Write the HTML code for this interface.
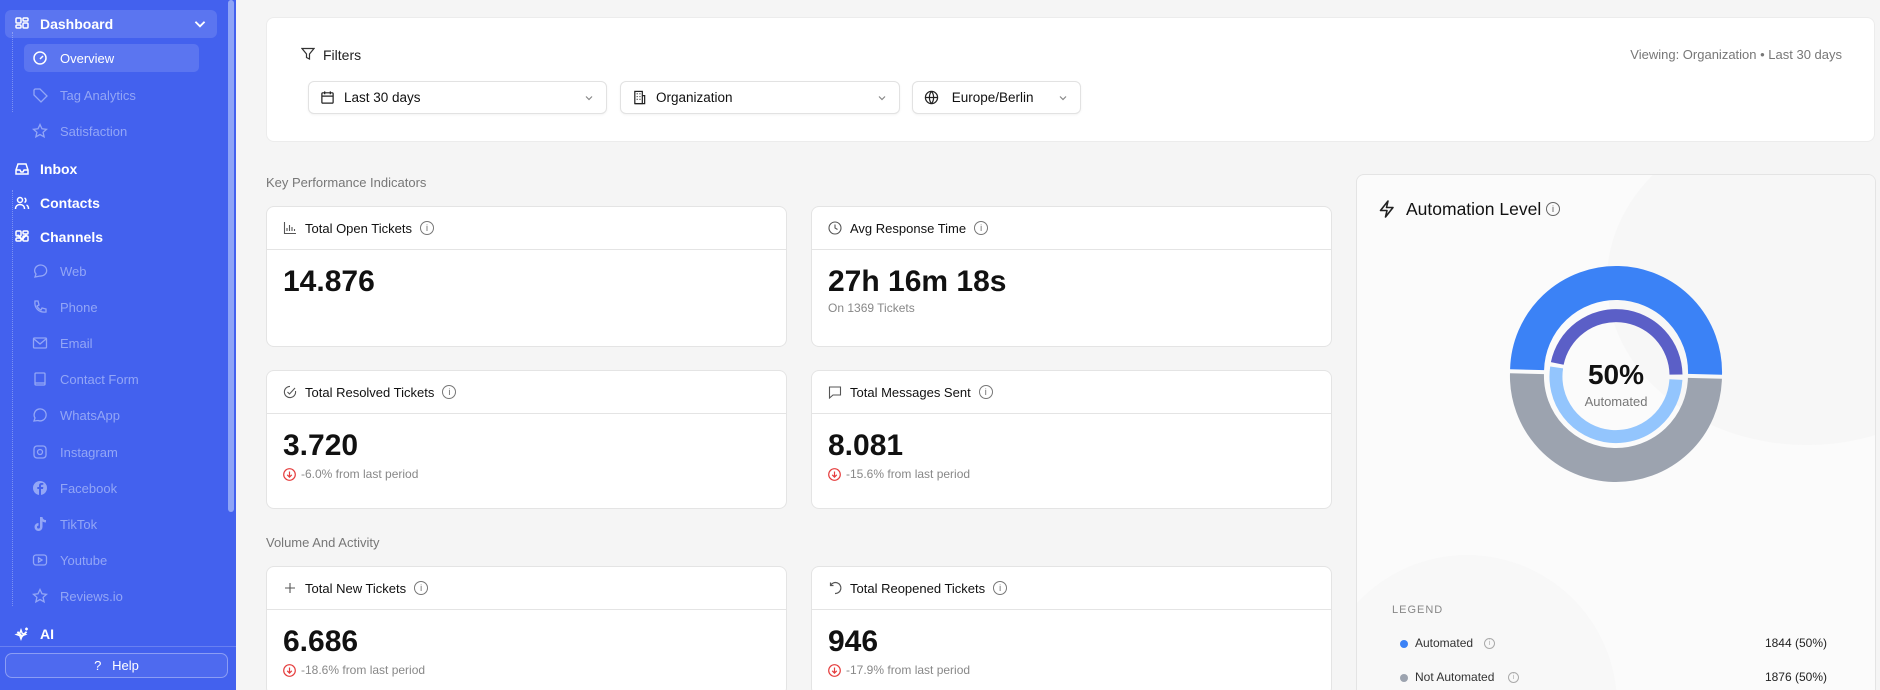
<!DOCTYPE html>
<html style="overflow:hidden;width:1880px;height:690px"><head><meta charset="utf-8"><style>
*{box-sizing:border-box;margin:0;padding:0}
body{width:1880px;height:690px;overflow:hidden;background:#f5f5f5;font-family:"Liberation Sans",sans-serif;position:relative;color:#111}
.a{position:absolute}
#sb{left:0;top:0;width:236px;height:690px;background:#4361ee}
.si{position:absolute;left:0;width:236px;height:20px;display:flex;align-items:center;font-size:14px;color:#fff;font-weight:bold}
.si svg{position:absolute;left:14px;width:16px;height:16px}
.si span{position:absolute;left:40px}
.sub{font-weight:normal;font-size:13px;color:#93a6f6}
.sub svg{left:32px}
.sub span{left:60px}
.chev{position:absolute;left:192px;width:14px;height:14px}
.card{position:absolute;background:#fff;border:1px solid #e4e4e4;border-radius:8px;overflow:hidden}
.ch{height:43px;border-bottom:1px solid #e4e4e4;display:flex;align-items:center;padding-left:16px;font-size:13px;color:#111}
.ch svg{width:14px;height:14px;margin-right:8px}
.info{width:14px;height:14px;border:1px solid #777;border-radius:50%;margin-left:8px;font-size:9px;color:#666;display:flex;align-items:center;justify-content:center}
.num{position:absolute;left:16px;top:58px;font-size:30px;font-weight:bold;color:#111}
.sub2{position:absolute;left:16px;top:96px;font-size:12px;color:#888;display:flex;align-items:center}
.down{width:13px;height:13px;margin-right:5px}
.dd{position:absolute;top:81px;height:33px;background:#fff;border:1px solid #e2e2e2;border-radius:6px;display:flex;align-items:center;font-size:13.5px;color:#111;box-shadow:0 1px 2px rgba(0,0,0,.05)}
.dd svg.i{width:15px;height:15px;margin:0 9px 0 11px}
.dd .cv{position:absolute;right:12px;top:11px;width:10px;height:10px}
.sec{position:absolute;left:266px;font-size:13px;color:#777}
</style></head><body>
<svg width="0" height="0" style="position:absolute"><defs><g id="dn"><circle cx="6.5" cy="6.5" r="5.8" fill="none" stroke="#e53e3e" stroke-width="1.2"/><path d="M6.5 3.5v5.5M4.2 6.8l2.3 2.3 2.3-2.3" fill="none" stroke="#e53e3e" stroke-width="1.2"/></g></defs></svg>
<div class="a" id="sb"></div>
<div class="a" style="left:228px;top:0;width:6px;height:512px;background:#8ea4f7;border-radius:3px"></div>
<div class="a" style="left:5px;top:10px;width:212px;height:28px;background:rgba(255,255,255,.13);border-radius:6px"></div>
<div class="a" style="left:24px;top:44px;width:175px;height:28px;background:rgba(255,255,255,.13);border-radius:5px"></div>
<div class="a" style="left:12px;top:32px;width:1px;height:80px;border-left:1px dotted rgba(255,255,255,.3)"></div>
<div class="a" style="left:12px;top:190px;width:1px;height:416px;border-left:1px dotted rgba(255,255,255,.3)"></div>

<div class="si" style="top:14px"><svg viewBox="0 0 16 16" fill="none" stroke="#fff" stroke-width="1.5"><rect x="2" y="2" width="5" height="5" rx="1"/><rect x="9" y="2" width="5" height="3" rx="1"/><rect x="2" y="9" width="5" height="3" rx="1"/><rect x="9" y="7" width="5" height="5" rx="1"/></svg><span>Dashboard</span><svg class="chev" style="left:192px" viewBox="0 0 14 14" fill="none" stroke="#fff" stroke-width="1.6"><path d="M3 5l4 4 4-4"/></svg></div>
<div class="si sub" style="top:48px;color:#fff"><svg viewBox="0 0 16 16" fill="none" stroke="#fff" stroke-width="1.5"><circle cx="8" cy="8" r="6"/><path d="M8 9l3-3"/></svg><span>Overview</span></div>
<div class="si sub" style="top:85px"><svg viewBox="0 0 16 16" fill="none" stroke="#93a6f6" stroke-width="1.3"><path d="M2 3v5l7 7 6-6-7-7H3z"/></svg><span>Tag Analytics</span></div>
<div class="si sub" style="top:121px"><svg viewBox="0 0 16 16" fill="none" stroke="#93a6f6" stroke-width="1.3"><path d="M8 1.5l2 4.3 4.5.5-3.4 3 1 4.5L8 11.5 3.9 13.8l1-4.5-3.4-3 4.5-.5z"/></svg><span>Satisfaction</span></div>
<div class="si" style="top:159px"><svg viewBox="0 0 16 16" fill="none" stroke="#fff" stroke-width="1.5"><path d="M2 9l2-6h8l2 6v4H2zM2 9h4l1 2h2l1-2h4"/></svg><span>Inbox</span></div>
<div class="si" style="top:193px"><svg viewBox="0 0 16 16" fill="none" stroke="#fff" stroke-width="1.5"><circle cx="6" cy="5" r="2.5"/><path d="M1.5 14c0-3 2-4.5 4.5-4.5s4.5 1.5 4.5 4.5M10.5 3a2.5 2.5 0 010 4.5M12.5 10c1.3.6 2 2 2 4"/></svg><span>Contacts</span></div>
<div class="si" style="top:227px"><svg viewBox="0 0 16 16" fill="none" stroke="#fff" stroke-width="1.5"><rect x="2" y="2" width="5" height="5" rx="1"/><rect x="9" y="2" width="5" height="3" rx="1"/><rect x="2" y="9" width="5" height="3" rx="1"/><rect x="9" y="7" width="5" height="5" rx="1"/></svg><span>Channels</span><svg class="chev" viewBox="0 0 14 14" fill="none" stroke="#fff" stroke-width="1.6"><path d="M3 5l4 4 4-4"/></svg></div>
<div class="si sub" style="top:261px"><svg viewBox="0 0 16 16" fill="none" stroke="#93a6f6" stroke-width="1.3"><path d="M3 14l1-3a6 5.5 0 114 2z"/></svg><span>Web</span></div>
<div class="si sub" style="top:297px"><svg viewBox="0 0 16 16" fill="none" stroke="#93a6f6" stroke-width="1.3"><path d="M3 2h3l1 4-2 1a8 8 0 004 4l1-2 4 1v3c-7 1-12-4-11-11z"/></svg><span>Phone</span></div>
<div class="si sub" style="top:333px"><svg viewBox="0 0 16 16" fill="none" stroke="#93a6f6" stroke-width="1.3"><rect x="1.5" y="3" width="13" height="10" rx="1"/><path d="M2 4l6 5 6-5"/></svg><span>Email</span></div>
<div class="si sub" style="top:369px"><svg viewBox="0 0 16 16" fill="none" stroke="#93a6f6" stroke-width="1.3"><rect x="3" y="2" width="10" height="12" rx="1"/><path d="M3 12h10"/></svg><span>Contact Form</span></div>
<div class="si sub" style="top:405px"><svg viewBox="0 0 16 16" fill="none" stroke="#93a6f6" stroke-width="1.3"><path d="M2 14l1-3a6 6 0 113 2.5z"/></svg><span>WhatsApp</span></div>
<div class="si sub" style="top:442px"><svg viewBox="0 0 16 16" fill="none" stroke="#93a6f6" stroke-width="1.3"><rect x="2" y="2" width="12" height="12" rx="3"/><circle cx="8" cy="8" r="2.5"/></svg><span>Instagram</span></div>
<div class="si sub" style="top:478px"><svg viewBox="0 0 16 16"><circle cx="8" cy="8" r="7" fill="#93a6f6"/><path d="M9 15V9h2l.3-2H9V5.8c0-.6.3-1 1-1h1.3V3h-1.8C7.8 3 7 4 7 5.5V7H5.3v2H7v6z" fill="#4361ee"/></svg><span>Facebook</span></div>
<div class="si sub" style="top:514px"><svg viewBox="0 0 16 16"><path d="M8 1h2.5c.2 2 1.5 3 3.5 3v2.5c-1.3 0-2.5-.4-3.5-1V11a4 4 0 11-4-4v2.6A1.5 1.5 0 108 11z" fill="#93a6f6"/></svg><span>TikTok</span></div>
<div class="si sub" style="top:550px"><svg viewBox="0 0 16 16" fill="none" stroke="#93a6f6" stroke-width="1.3"><rect x="1.5" y="3" width="13" height="10" rx="2.5"/><path d="M6.5 5.8v4.4L10 8z"/></svg><span>Youtube</span></div>
<div class="si sub" style="top:586px"><svg viewBox="0 0 16 16" fill="none" stroke="#93a6f6" stroke-width="1.3"><path d="M8 1.5l2 4.3 4.5.5-3.4 3 1 4.5L8 11.5 3.9 13.8l1-4.5-3.4-3 4.5-.5z"/></svg><span>Reviews.io</span></div>
<div class="si" style="top:624px"><svg viewBox="0 0 16 16" fill="none" stroke="#fff" stroke-width="1.4"><path d="M7 4l1.2 3.3L11.5 8.5 8.2 9.7 7 13 5.8 9.7 2.5 8.5l3.3-1.2zM12.5 1.5v3M11 3h3"/></svg><span>AI</span><svg class="chev" viewBox="0 0 14 14" fill="none" stroke="#fff" stroke-width="1.6"><path d="M3 5l4 4 4-4"/></svg></div>
<div class="a" style="left:0;top:646px;width:236px;height:1px;background:rgba(255,255,255,.2)"></div>
<div class="a" style="left:5px;top:653px;width:223px;height:25px;border:1px solid rgba(255,255,255,.35);border-radius:7px;background:rgba(255,255,255,.06);color:#fff;font-size:13px;display:flex;align-items:center;justify-content:center">?&nbsp;&nbsp;&nbsp;Help</div>

<!-- filters -->
<div class="a" style="left:266px;top:17px;width:1609px;height:125px;background:#fff;border-radius:8px;border:1px solid #ececec"></div>
<svg class="a" style="left:301px;top:47px" width="14" height="14" viewBox="0 0 14 14" fill="none" stroke="#333" stroke-width="1.2"><path d="M1 1.5h12L8.5 7v5l-3-1.5V7z"/></svg>
<div class="a" style="left:323px;top:47px;font-size:14px;color:#222">Filters</div>
<div class="a" style="left:1576px;top:47px;width:266px;text-align:right;font-size:13px;color:#777">Viewing: Organization • Last 30 days</div>
<div class="dd" style="left:308px;width:299px"><svg class="i" viewBox="0 0 16 16" fill="none" stroke="#222" stroke-width="1.3"><rect x="2" y="3" width="12" height="11" rx="1"/><path d="M2 6.5h12M5 1.5v3M11 1.5v3"/></svg>Last 30 days<svg class="cv" viewBox="0 0 10 10" fill="none" stroke="#888" stroke-width="1.2"><path d="M2 3.5l3 3 3-3"/></svg></div>
<div class="dd" style="left:620px;width:280px"><svg class="i" viewBox="0 0 16 16" fill="none" stroke="#222" stroke-width="1.3"><rect x="3" y="1.5" width="8" height="13"/><path d="M11 6h2.5v8.5H3M5 4h1M8 4h1M5 7h1M8 7h1M5 10h1M8 10h1"/></svg>Organization<svg class="cv" viewBox="0 0 10 10" fill="none" stroke="#888" stroke-width="1.2"><path d="M2 3.5l3 3 3-3"/></svg></div>
<div class="dd" style="left:912px;width:169px"><svg class="i" viewBox="0 0 16 16" fill="none" stroke="#222" stroke-width="1.3"><circle cx="8" cy="8" r="6.5"/><path d="M1.5 8h13M8 1.5c-3 3.5-3 9.5 0 13M8 1.5c3 3.5 3 9.5 0 13"/></svg>&nbsp;Europe/Berlin<svg class="cv" viewBox="0 0 10 10" fill="none" stroke="#888" stroke-width="1.2"><path d="M2 3.5l3 3 3-3"/></svg></div>

<div class="sec" style="top:175px">Key Performance Indicators</div>
<div class="sec" style="top:535px">Volume And Activity</div>

<div class="card" style="left:266px;top:206px;width:521px;height:141px"><div class="ch"><svg viewBox="0 0 14 14" fill="none" stroke="#555" stroke-width="1.1"><path d="M1.5 1v11.5H13M4 10V7M6.5 10V4M9 10V6M11.5 10V8"/></svg>Total Open Tickets<div class="info">i</div></div><div class="num">14.876</div></div>
<div class="card" style="left:811px;top:206px;width:521px;height:141px"><div class="ch"><svg viewBox="0 0 14 14" fill="none" stroke="#555" stroke-width="1.1"><circle cx="7" cy="7" r="6"/><path d="M7 3.5V7l2.5 1.5"/></svg>Avg Response Time<div class="info">i</div></div><div class="num">27h 16m 18s</div><div class="sub2" style="top:94px">On 1369 Tickets</div></div>
<div class="card" style="left:266px;top:370px;width:521px;height:139px"><div class="ch"><svg viewBox="0 0 14 14" fill="none" stroke="#555" stroke-width="1.1"><path d="M12.5 6A5.6 5.6 0 117 1.4"/><path d="M4.5 7l2 2L12 3"/></svg>Total Resolved Tickets<div class="info">i</div></div><div class="num">3.720</div><div class="sub2"><svg class="down" viewBox="0 0 13 13"><use href="#dn"/></svg>-6.0% from last period</div></div>
<div class="card" style="left:811px;top:370px;width:521px;height:139px"><div class="ch"><svg viewBox="0 0 14 14" fill="none" stroke="#555" stroke-width="1.1"><path d="M1.5 2h11v8H5l-3.5 3z"/></svg>Total Messages Sent<div class="info">i</div></div><div class="num">8.081</div><div class="sub2"><svg class="down" viewBox="0 0 13 13"><use href="#dn"/></svg>-15.6% from last period</div></div>
<div class="card" style="left:266px;top:566px;width:521px;height:130px"><div class="ch"><svg viewBox="0 0 14 14" fill="none" stroke="#555" stroke-width="1.1"><path d="M7 2v10M2 7h10"/></svg>Total New Tickets<div class="info">i</div></div><div class="num">6.686</div><div class="sub2"><svg class="down" viewBox="0 0 13 13"><use href="#dn"/></svg>-18.6% from last period</div></div>
<div class="card" style="left:811px;top:566px;width:521px;height:130px"><div class="ch"><svg viewBox="0 0 14 14" fill="none" stroke="#555" stroke-width="1.2"><path d="M2.5 4.5A5.5 5.5 0 117 12.5M2.5 1.5v3h3"/></svg>Total Reopened Tickets<div class="info">i</div></div><div class="num">946</div><div class="sub2"><svg class="down" viewBox="0 0 13 13"><use href="#dn"/></svg>-17.9% from last period</div></div>

<!-- automation -->
<div class="card" style="left:1356px;top:174px;width:520px;height:524px;background:#fbfbfb">
<div class="a" style="left:250px;top:-60px;width:400px;height:330px;border-radius:50%;background:#f7f7f7"></div>
<div class="a" style="left:-40px;top:380px;width:300px;height:300px;border-radius:50%;background:#f8f8f8"></div>
</div>
<svg class="a" style="left:1377px;top:199px" width="20" height="20" viewBox="0 0 20 20" fill="none" stroke="#222" stroke-width="1.6" stroke-linejoin="round"><path d="M11 2L3.5 11.5H10L8.5 18 16 8.5H9.5z"/></svg>
<div class="a" style="left:1406px;top:199px;font-size:17.5px;color:#111">Automation Level</div>
<div class="a" style="left:1546px;top:202px;width:14px;height:14px;border:1px solid #666;border-radius:50%;font-size:9px;color:#555;display:flex;align-items:center;justify-content:center">i</div>
<svg class="a" style="left:1491px;top:249px" width="250" height="250" viewBox="-125 -125 250 250">
<g transform="rotate(1.5)" fill="none">
<path d="M -89 -2 A 89 89 0 0 1 89 -2" stroke="#3b82f6" stroke-width="34"/>
<path d="M 89 2 A 89 89 0 0 1 -89 2" stroke="#9ca3af" stroke-width="34"/>
<path d="M -59 -9 A 60 60 0 0 1 60 -1" stroke="#5b5fc7" stroke-width="13"/>
<path d="M 60 4 A 60 60 0 1 1 -59.5 -5" stroke="#93c5fd" stroke-width="13"/>
</g>
<text x="0" y="10" text-anchor="middle" font-family="Liberation Sans" font-weight="bold" font-size="28" fill="#111">50%</text>
<text x="0" y="32" text-anchor="middle" font-family="Liberation Sans" font-size="13" fill="#777">Automated</text>
</svg>
<div class="a" style="left:1392px;top:604px;font-size:11px;color:#888;letter-spacing:1px">LEGEND</div>
<div class="a" style="left:1400px;top:640px;width:8px;height:8px;border-radius:50%;background:#3b82f6"></div>
<div class="a" style="left:1415px;top:636px;font-size:12px;color:#333">Automated</div>
<div class="a" style="left:1484px;top:638px;width:11px;height:11px;border:1px solid #aaa;border-radius:50%;font-size:7px;color:#aaa;text-align:center;line-height:9px">i</div>
<div class="a" style="left:1707px;top:636px;width:120px;text-align:right;font-size:12px;color:#222">1844 (50%)</div>
<div class="a" style="left:1400px;top:674px;width:8px;height:8px;border-radius:50%;background:#9ca3af"></div>
<div class="a" style="left:1415px;top:670px;font-size:12px;color:#333">Not Automated</div>
<div class="a" style="left:1508px;top:672px;width:11px;height:11px;border:1px solid #aaa;border-radius:50%;font-size:7px;color:#aaa;text-align:center;line-height:9px">i</div>
<div class="a" style="left:1707px;top:670px;width:120px;text-align:right;font-size:12px;color:#222">1876 (50%)</div>
</body></html>
